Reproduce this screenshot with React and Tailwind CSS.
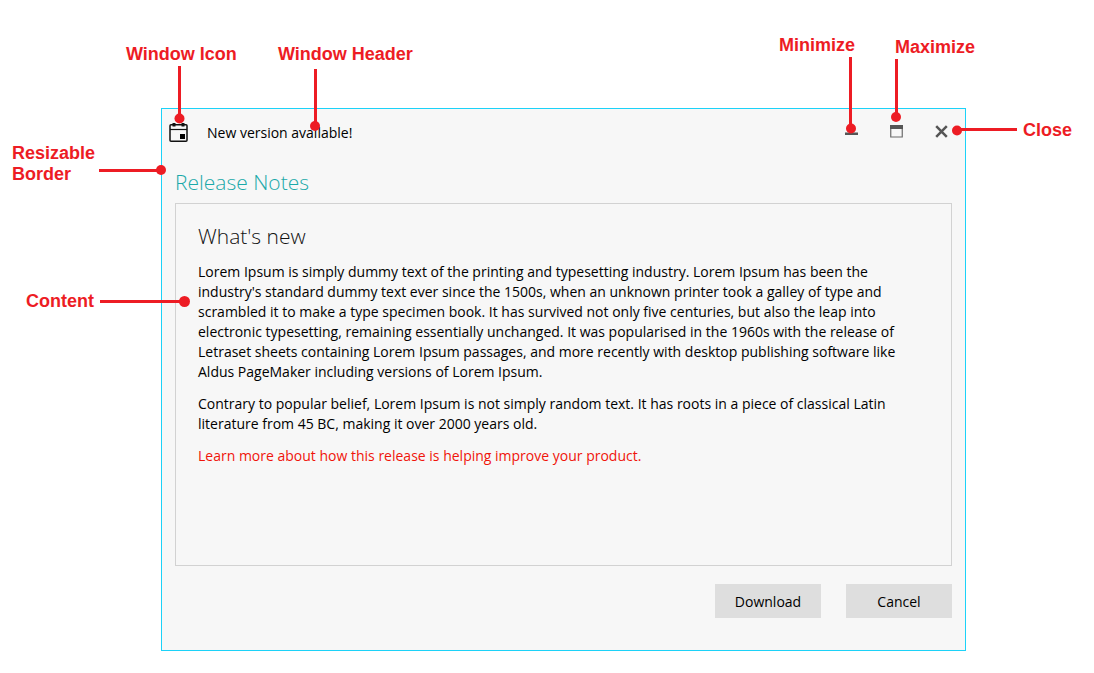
const NOTES = [
  [
    "Lorem Ipsum is simply dummy text of the printing and typesetting industry. Lorem Ipsum has been the",
    "industry's standard dummy text ever since the 1500s, when an unknown printer took a galley of type and",
    "scrambled it to make a type specimen book. It has survived not only five centuries, but also the leap into",
    "electronic typesetting, remaining essentially unchanged. It was popularised in the 1960s with the release of",
    "Letraset sheets containing Lorem Ipsum passages, and more recently with desktop publishing software like",
    "Aldus PageMaker including versions of Lorem Ipsum.",
  ],
  [
    "Contrary to popular belief, Lorem Ipsum is not simply random text. It has roots in a piece of classical Latin",
    "literature from 45 BC, making it over 2000 years old.",
  ],
];

function CalendarIcon() {
  return (
    <svg width="20" height="22" viewBox="0 0 20 22" aria-hidden="true">
      <rect x="1" y="3.75" width="17" height="16.5" rx="1" fill="none" stroke="#111" strokeWidth="1.5" />
      <path d="M1 8.5H18" stroke="#111" strokeWidth="1.2" />
      <path d="M5 2V5.500M14 2V5.500" stroke="#111" strokeWidth="3" />
      <rect x="11" y="13" width="5" height="5" fill="#000" />
    </svg>
  );
}

function MinimizeIcon() {
  return (
    <svg width="13" height="13" viewBox="0 0 13 13" aria-hidden="true">
      <path d="M0 7H13V8H0z" fill="#a5a5a5" />
      <path d="M0 8H13V10H0z" fill="#555" />
    </svg>
  );
}

function MaximizeIcon() {
  return (
    <svg width="13" height="13" viewBox="0 0 13 13" aria-hidden="true">
      <path d="M.75 2V12H12.25V2" fill="none" stroke="#6b6b6b" strokeWidth="1.2" />
      <path d="M0 0H13V4H0z" fill="#555" />
    </svg>
  );
}

function CloseIcon() {
  return (
    <svg width="13" height="13" viewBox="0 0 13 13" aria-hidden="true">
      <path d="M1.2 1.2L11.8 11.8M11.8 1.2L1.2 11.8" stroke="#555" strokeWidth="2.5" />
    </svg>
  );
}

function Callouts() {
  return (
    <div className="pointer-events-none absolute inset-0 font-['Liberation_Sans',Arial,sans-serif] text-[18px] leading-[21px] font-bold whitespace-nowrap text-[#ed1c24]">
      <svg className="absolute top-0 left-0" width="330" height="320" fill="currentColor" stroke="currentColor" strokeWidth="3" aria-hidden="true">
        <path d="M179.500 66V118M315.500 69V126M99 170.500H161M100 301.500H184" />
        <g stroke="none">
          <circle cx="179.500" cy="118.500" r="5" />
          <circle cx="315" cy="126" r="5" />
          <circle cx="161" cy="170" r="5" />
          <circle cx="184.500" cy="301.500" r="5.500" />
        </g>
      </svg>
      <svg className="absolute top-0 right-0" width="294" height="160" fill="currentColor" stroke="currentColor" strokeWidth="3" aria-hidden="true">
        <path d="M50.500 57V128M96.500 59V117M157 129.500H217" />
        <g stroke="none">
          <circle cx="51" cy="128.500" r="5" />
          <circle cx="96" cy="117" r="5" />
          <circle cx="157" cy="130.500" r="5" />
        </g>
      </svg>
      <span className="absolute top-11 left-[126px]">Window Icon</span>
      <span className="absolute top-11 left-[278px]">Window Header</span>
      <span className="absolute top-[143px] left-3">
        Resizable
        <br />
        Border
      </span>
      <span className="absolute top-[291px] left-[26px]">Content</span>
      <span className="absolute top-[35px] right-[239px]">Minimize</span>
      <span className="absolute top-[37px] right-[119px]">Maximize</span>
      <span className="absolute top-[120px] right-[22px]">Close</span>
    </div>
  );
}

const captionButton = "flex w-[45px] items-center justify-center";
const actionButton = "h-[34px] w-[106px] bg-[#dedede] pt-px text-black";

export default function App() {
  return (
    <main className="relative min-h-screen bg-white pt-[108px] pr-32 pb-[22px] pl-[161px] font-['Open_Sans','Noto_Sans',sans-serif] text-[14px] leading-5 text-black">
      <section aria-label="New version available!" className="border border-[#1cd2f8] bg-[#f7f7f7] pb-8">
        <header className="flex h-[45px] items-stretch pr-px">
          <div className="flex flex-1 items-center gap-[18px] pl-[7px]">
            <CalendarIcon />
            <span className="pt-[2px]">New version available!</span>
          </div>
          <button type="button" aria-label="Minimize" className={captionButton}>
            <MinimizeIcon />
          </button>
          <button type="button" aria-label="Maximize" className={captionButton}>
            <MaximizeIcon />
          </button>
          <button type="button" aria-label="Close" className={captionButton}>
            <CloseIcon />
          </button>
        </header>

        <div className="px-[13px] pt-3">
          <h1 className="text-[21px] leading-8 font-light text-[#1ba9a9]">Release Notes</h1>
          <div className="mt-[5px] flex min-h-[363px] flex-col gap-3 border border-[#d2d2d2] px-[22px] pt-4 pb-6">
            <h2 className="-mb-[2px] text-[21px] leading-8 font-light text-[#111]">What's new</h2>
            {NOTES.map((lines) => (
              <p key={lines[0]} className="whitespace-pre-line">
                {lines.join("\n")}
              </p>
            ))}
            <p>
              <a href="#release" className="text-[#f0140a]">
                Learn more about how this release is helping improve your product.
              </a>
            </p>
          </div>
          <div className="mt-[18px] flex justify-end gap-[25px]">
            <button type="button" className={actionButton}>Download</button>
            <button type="button" className={actionButton}>Cancel</button>
          </div>
        </div>
      </section>
      <Callouts />
    </main>
  );
}
